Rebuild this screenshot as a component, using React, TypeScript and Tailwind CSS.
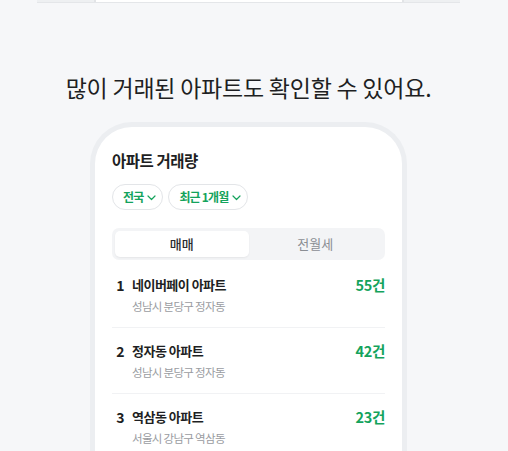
import { ReactNode } from "react";

const rows = [
  { rank: 1, name: "네이버페이 아파트", area: "성남시 분당구 정자동", count: "55건" },
  { rank: 2, name: "정자동 아파트", area: "성남시 분당구 정자동", count: "42건" },
  { rank: 3, name: "역삼동 아파트", area: "서울시 강남구 역삼동", count: "23건" },
];

function Chevron() {
  return (
    <svg width="9" height="6" viewBox="0 0 9 6" fill="none" className="ml-[4px] mt-[1px]">
      <path d="M1 1l3.5 3.5L8 1" stroke="#14a35c" strokeWidth="1.2" strokeLinecap="round" strokeLinejoin="round" />
    </svg>
  );
}

function Chip({ children }: { children: ReactNode }) {
  return (
    <button className="flex h-[26px] items-center rounded-full border border-[#e3e5e8] bg-white pl-[10px] pr-[6px] text-[12px] font-bold tracking-[-0.07em] text-[#14a35c]">
      {children}
      <Chevron />
    </button>
  );
}

export default function App() {
  return (
    <div
      className="h-[451px] w-[508px] overflow-hidden bg-[#f6f7f9] pr-[11px]"
      style={{ fontFamily: '"Noto Sans CJK KR", "Noto Sans", sans-serif' }}
    >
      {/* bottom edge of the previous section */}
      <div className="mx-auto flex h-[3px] w-[423px] justify-center border-b border-[#e4e6e9] bg-[#eef0f2]">
        <div className="h-[2px] w-[310px] border-x-2 border-[#e2e4e7] bg-white" />
      </div>

      <h2 className="mt-[67px] text-center text-[23px] leading-[34px] tracking-[-0.01em] text-[#1e1f23]">
        많이 거래된 아파트도 확인할 수 있어요.
      </h2>

      <div className="mx-auto mt-[18px] w-[317px] rounded-t-[42px] border-x-[5px] border-t-[5px] border-[#eceef1] bg-white px-[17px] pt-[22px]">
        <h3 className="text-[15.5px] font-bold leading-[22px] tracking-[-0.03em] text-[#1e1f23]">아파트 거래량</h3>

        <div className="mt-[13px] flex gap-[5px]">
          <Chip>전국</Chip>
          <Chip>최근 1개월</Chip>
        </div>

        <div className="mt-[18px] flex h-[32px] rounded-[7px] bg-[#f3f4f6] p-[3px]">
          <div className="flex flex-1 items-center justify-center rounded-[5px] bg-white text-[13px] font-medium text-[#2a2b2f] shadow-[0_1px_2px_rgba(0,0,0,0.06)]">
            매매
          </div>
          <div className="flex flex-1 items-center justify-center text-[13px] text-[#8b8e94]">전월세</div>
        </div>

        <ul className="mt-[2px]">
          {rows.map((r) => (
            <li key={r.rank} className="flex border-b border-[#f1f2f4] pb-[13px] pt-[14px]">
              <span className="w-[17px] text-center text-[14px] font-bold leading-[18px] text-[#1e1f23]">{r.rank}</span>
              <div className="ml-[3px] flex-1">
                <div className="text-[13px] font-bold leading-[18px] tracking-[-0.04em] text-[#1e1f23]">{r.name}</div>
                <div className="mt-[4px] text-[11.5px] leading-[16px] tracking-[-0.06em] text-[#9a9ca1]">{r.area}</div>
              </div>
              <span className="text-[14.5px] font-bold leading-[18px] tracking-[-0.02em] text-[#14a35c]">{r.count}</span>
            </li>
          ))}
        </ul>
      </div>
    </div>
  );
}
